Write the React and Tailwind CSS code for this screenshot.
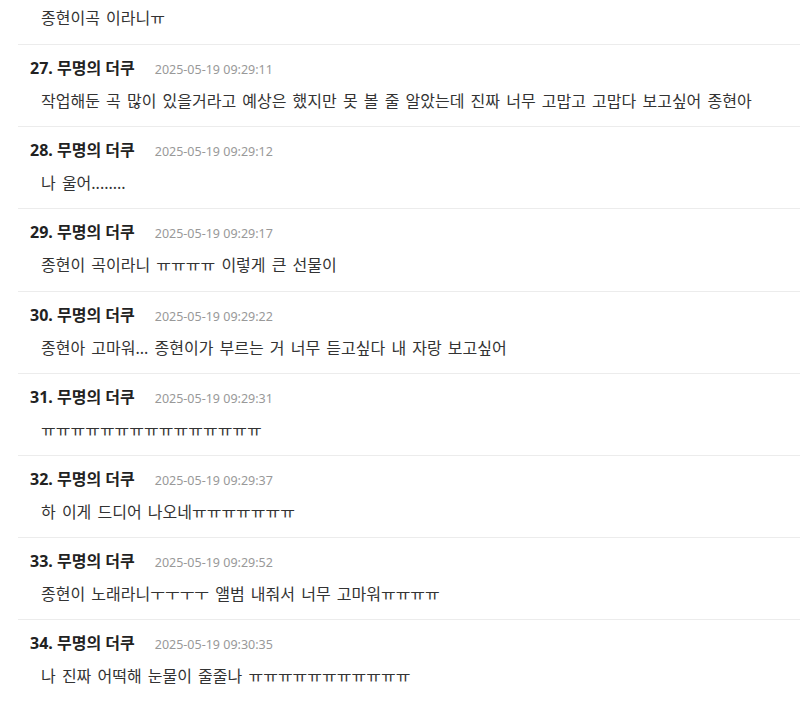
import React from 'react';

const comments = [
  { no: 27, time: '2025-05-19 09:29:11', text: '작업해둔 곡 많이 있을거라고 예상은 했지만 못 볼 줄 알았는데 진짜 너무 고맙고 고맙다 보고싶어 종현아' },
  { no: 28, time: '2025-05-19 09:29:12', text: '나 울어........' },
  { no: 29, time: '2025-05-19 09:29:17', text: '종현이 곡이라니 ㅠㅠㅠㅠ 이렇게 큰 선물이' },
  { no: 30, time: '2025-05-19 09:29:22', text: '종현아 고마워... 종현이가 부르는 거 너무 듣고싶다 내 자랑 보고싶어' },
  { no: 31, time: '2025-05-19 09:29:31', text: 'ㅠㅠㅠㅠㅠㅠㅠㅠㅠㅠㅠㅠㅠㅠㅠ' },
  { no: 32, time: '2025-05-19 09:29:37', text: '하 이게 드디어 나오네ㅠㅠㅠㅠㅠㅠㅠ' },
  { no: 33, time: '2025-05-19 09:29:52', text: '종현이 노래라니ㅜㅜㅜㅜ 앨범 내줘서 너무 고마워ㅠㅠㅠㅠ' },
  { no: 34, time: '2025-05-19 09:30:35', text: '나 진짜 어떡해 눈물이 줄줄나 ㅠㅠㅠㅠㅠㅠㅠㅠㅠㅠㅠ' },
];

function CommentItem({ c }) {
  return (
    <li className="border-t border-[#ececec] pl-3 pt-[13px] pb-[14.2px]">
      <div className="flex items-baseline h-5 leading-5">
        <span className="text-[16px] font-bold text-[#222]">{c.no}. 무명의 더쿠</span>
        <span className="ml-5 text-[12.5px] text-[#999]">{c.time}</span>
      </div>
      <p className="mt-3 pl-[11px] text-[16px] leading-[22px] text-[#333] [word-spacing:2px]">{c.text}</p>
    </li>
  );
}

export default function App() {
  return (
    <div className="min-h-screen bg-white font-['Noto_Sans','Noto_Sans_CJK_KR',sans-serif]">
      <div className="ml-[18px]">
        <p className="pl-[23px] pt-[7px] pb-[15px] text-[16px] leading-[22px] text-[#333] [word-spacing:2px]">종현이곡 이라니ㅠ</p>
        <ul>
          {comments.map((c) => (
            <CommentItem key={c.no} c={c} />
          ))}
        </ul>
      </div>
    </div>
  );
}
